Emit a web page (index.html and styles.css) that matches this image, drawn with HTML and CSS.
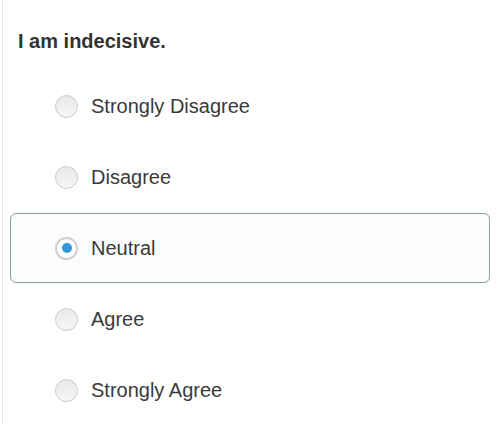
FILE: index.html
```html
<!DOCTYPE html>
<html>
<head>
<meta charset="utf-8">
<link rel="stylesheet" href="styles.css">
</head>
<body>
<div class="card">
  <h1 class="question">I am indecisive.</h1>
  <div class="options">
    <label class="option"><span class="radio"></span><span class="label">Strongly Disagree</span></label>
    <label class="option"><span class="radio"></span><span class="label">Disagree</span></label>
    <label class="option selected"><span class="radio checked"></span><span class="label">Neutral</span></label>
    <label class="option"><span class="radio"></span><span class="label">Agree</span></label>
    <label class="option"><span class="radio"></span><span class="label">Strongly Agree</span></label>
  </div>
</div>
</body>
</html>
```

FILE: styles.css
```css
html, body {
  margin: 0;
  padding: 0;
  background: #ffffff;
}
body {
  font-family: "Liberation Sans", Arial, sans-serif;
  color: #333333;
  width: 500px;
  height: 424px;
  overflow: hidden;
}
.card {
  margin-left: 2px;
  border-left: 1px solid #e6e6e6;
  height: 424px;
  box-sizing: border-box;
  padding-top: 29px;
}
.question {
  margin: 0 0 0 15px;
  font-size: 20px;
  line-height: 24px;
  font-weight: bold;
  color: #333333;
  height: 42px;
}
.options {
  display: flex;
  flex-direction: column;
  gap: 1px;
  padding: 0 10px 0 7px;
}
.option {
  display: flex;
  align-items: center;
  gap: 13px;
  height: 70px;
  box-sizing: border-box;
  padding-left: 44px;
  border: 1px solid transparent;
  border-radius: 6px;
}
.option.selected {
  border-color: #8e9fa3;
  background: #fafcfd;
}
.radio {
  width: 23px;
  height: 23px;
  box-sizing: border-box;
  border-radius: 50%;
  border: 1px solid #c9c9c9;
  background: linear-gradient(#e9e9e9, #f6f6f6);
  display: flex;
  align-items: center;
  justify-content: center;
  flex: none;
}
.radio.checked {
  border: 2px solid #d0d0d0;
  background: #ffffff;
}
.radio.checked::after {
  content: "";
  width: 10px;
  height: 10px;
  border-radius: 50%;
  background: #3598dc;
}
.label {
  font-size: 20px;
  line-height: 24px;
  color: #3a3a3a;
}
```
